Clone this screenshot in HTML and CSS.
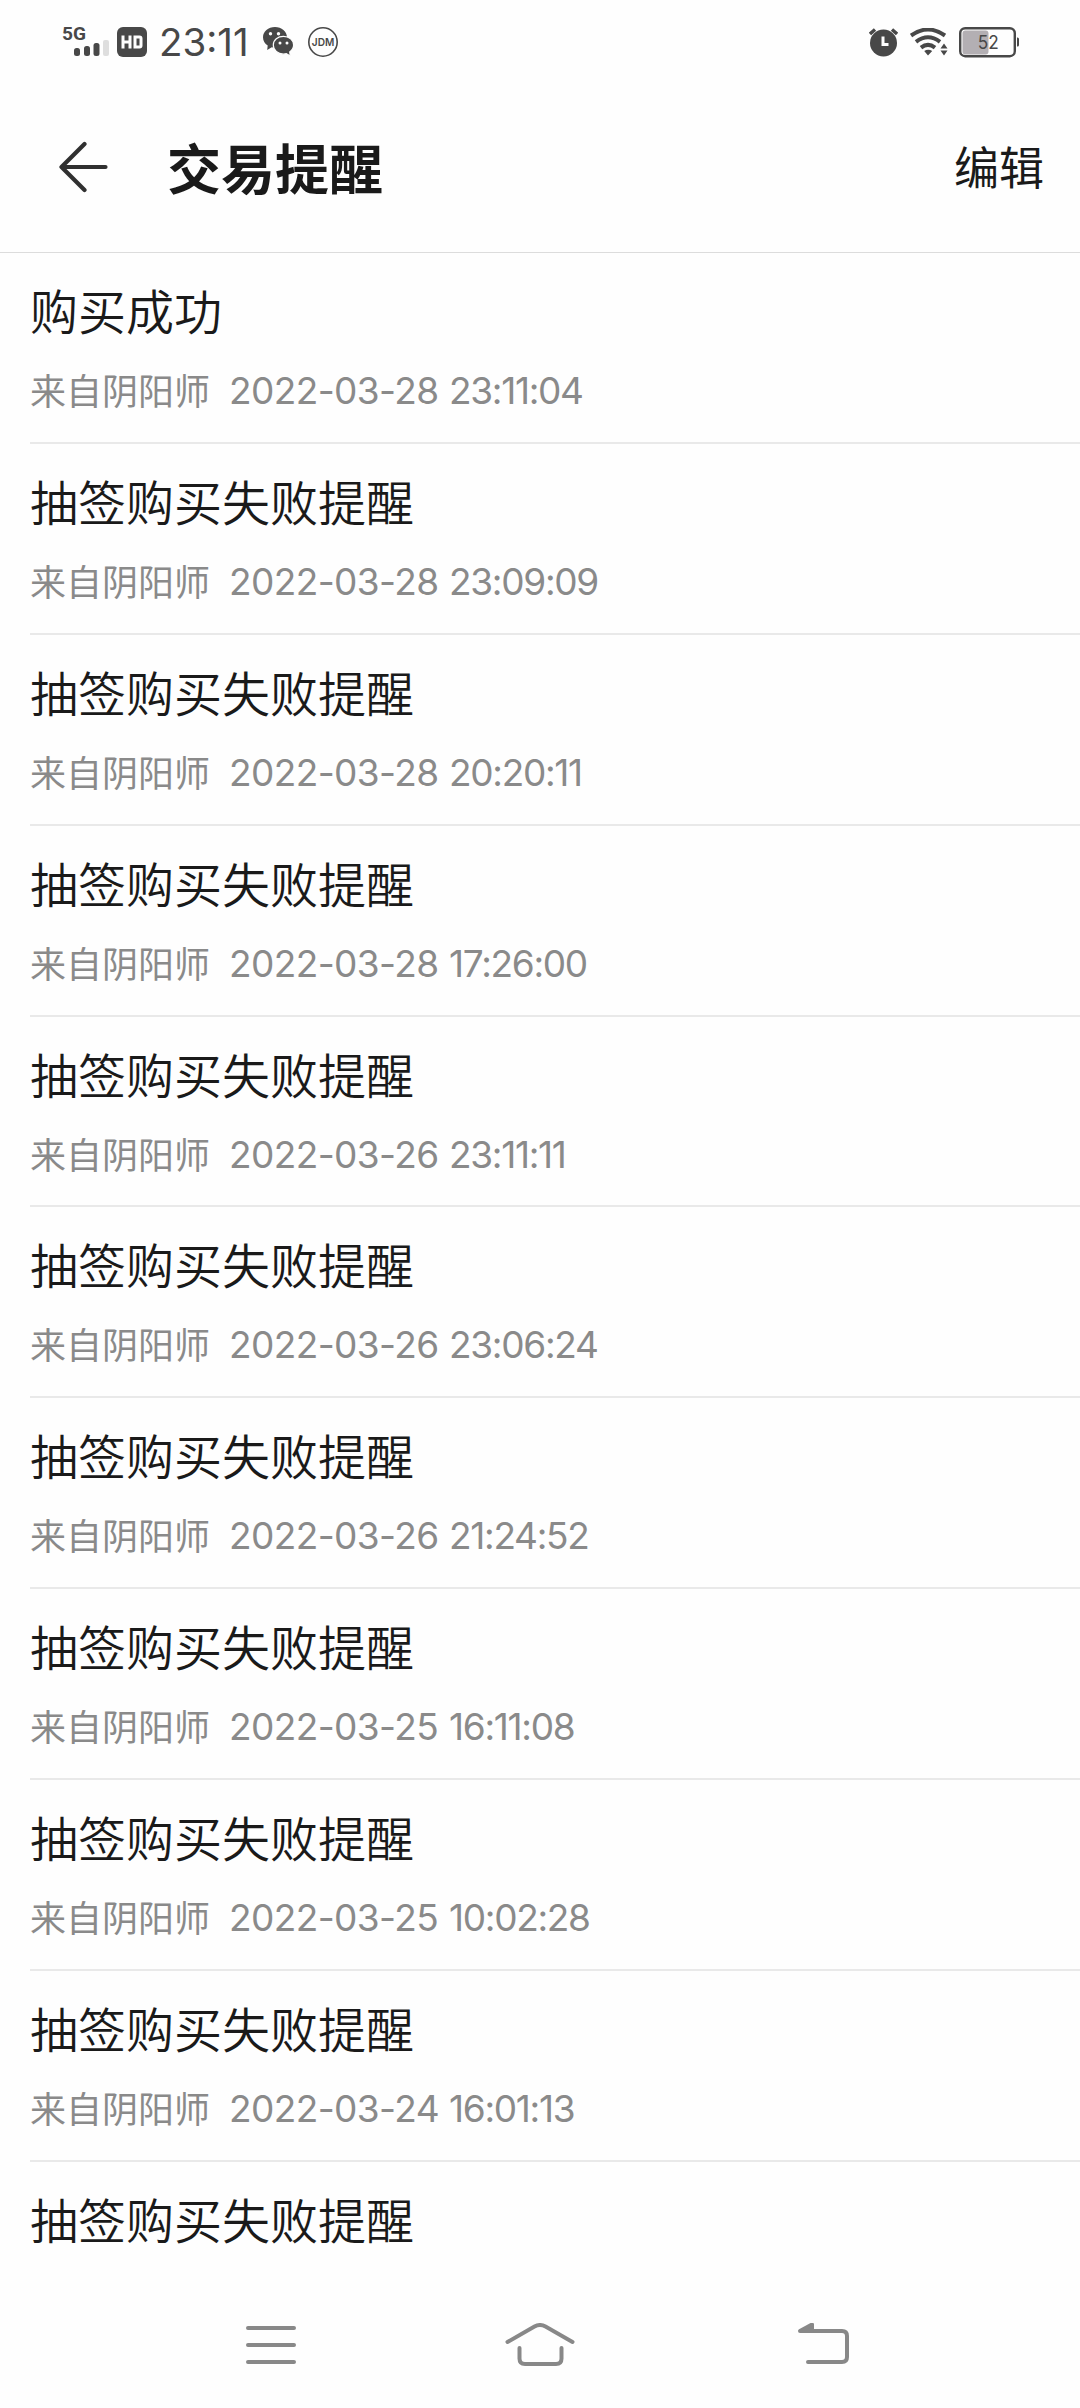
FILE: index.html
```html
<!DOCTYPE html>
<html lang="zh-CN">
<head>
<meta charset="utf-8">
<title>交易提醒</title>
<link rel="stylesheet" href="styles.css">
</head>
<body>
<div class="screen">
  <div class="status">
    <div class="status-left">
      <svg class="signal" width="48" height="38" viewBox="0 -4 48 38">
        <text class="net" x="0" y="15" textLength="24" lengthAdjust="spacingAndGlyphs">5G</text>
        <rect x="12" y="23" width="6" height="8" rx="2.5"/><rect x="22" y="21" width="6" height="10" rx="2.5"/><rect x="31.500" y="18" width="6" height="13" rx="2.500"/><rect class="faint" x="41" y="15" width="6" height="16" rx="2"/>
      </svg>
      <svg class="hd" width="30" height="30" viewBox="0 0 30 30"><rect width="30" height="30" rx="6"/><path class="cut" d="M6 8.500v13M13 8.500v13M6 15h7M18 10h4.500q1.500 0 1.500 1.500v7q0 1.500-1.500 1.500H18z"/></svg>
      <span class="clock">23:11</span>
      <svg class="wechat" width="31" height="30" viewBox="0 0 31 30"><path d="M12 0C5.200 0 0 4.500 0 10.200c0 3.500 1.800 6.400 4.700 8.300L4.200 23l4.500-2.800 3.300.5c6.500 0 12-4.500 12-10.300S18.500 0 12 0z"/><path class="bubble" d="M20.500 9.400c5.700 0 10.100 3.800 10.100 8.600 0 2.900-1.600 5.300-3.900 6.900l.6 4.100-4-2.300-2.800.5c-5.700 0-10.200-4-10.200-9.200s4.500-8.600 10.200-8.600z"/><g class="dot"><circle cx="7.500" cy="6.700" r="1.700"/><circle cx="15.500" cy="6.700" r="1.700"/><circle cx="17" cy="16" r="1.500"/><circle cx="24" cy="16" r="1.500"/></g></svg>
      <svg class="jdm" width="30" height="30" viewBox="0 0 30 30"><circle cx="15" cy="15" r="14.200"/><text x="3.800" y="19" textLength="22.500" lengthAdjust="spacingAndGlyphs">JDM</text></svg>
    </div>
    <div class="status-right">
      <svg class="alarm" width="29" height="29" viewBox="0 0 29 29"><circle cx="14.500" cy="15" r="13.500"/><path class="bell" d="M1 6l5-4.500M28 6l-5-4.500"/><path class="hand" d="M14 8.500V16.500h5.500"/></svg>
      <svg class="wifi" width="38" height="28" viewBox="0 0 38 28"><path class="arc" d="M1 7.500Q18 -4.500 35 7.500M6 13.800Q18 4.800 30 13.800M11 19.600Q18 14.200 25 19.600"/><path d="M14.200 23q4-2.500 8 0L18 27.500zM30.500 20.500L34 15.500l3.500 5zM30.500 22.500h7L34 27.500z"/></svg>
      <svg class="battery" width="61" height="31" viewBox="0 0 61 31"><rect class="level" x="3.500" y="3.500" width="26" height="24" rx="3"/><rect class="case" x="1.200" y="1.200" width="54.600" height="28" rx="5"/><path d="M58 10.500h.5q1.500 0 1.500 1.500v6q0 1.500-1.500 1.500H58z"/><text x="18.700" y="21.700" textLength="21" lengthAdjust="spacingAndGlyphs">52</text></svg>
    </div>
  </div>
  <header class="header">
    <svg class="back" width="50" height="52" viewBox="0 0 50 52"><path d="M25.500 3L2.500 26l23 23M3 26h43.500"/></svg>
    <h1 class="title">交易提醒</h1>
    <span class="edit">编辑</span>
  </header>
  <main class="list">
    <div class="row"><div class="name">购买成功</div><div class="meta"><span class="from">来自阴阳师</span><span class="date">2022-03-28</span><span class="time">23:11:04</span></div></div>
    <div class="row"><div class="name">抽签购买失败提醒</div><div class="meta"><span class="from">来自阴阳师</span><span class="date">2022-03-28</span><span class="time">23:09:09</span></div></div>
    <div class="row"><div class="name">抽签购买失败提醒</div><div class="meta"><span class="from">来自阴阳师</span><span class="date">2022-03-28</span><span class="time">20:20:11</span></div></div>
    <div class="row"><div class="name">抽签购买失败提醒</div><div class="meta"><span class="from">来自阴阳师</span><span class="date">2022-03-28</span><span class="time">17:26:00</span></div></div>
    <div class="row"><div class="name">抽签购买失败提醒</div><div class="meta"><span class="from">来自阴阳师</span><span class="date">2022-03-26</span><span class="time">23:11:11</span></div></div>
    <div class="row"><div class="name">抽签购买失败提醒</div><div class="meta"><span class="from">来自阴阳师</span><span class="date">2022-03-26</span><span class="time">23:06:24</span></div></div>
    <div class="row"><div class="name">抽签购买失败提醒</div><div class="meta"><span class="from">来自阴阳师</span><span class="date">2022-03-26</span><span class="time">21:24:52</span></div></div>
    <div class="row"><div class="name">抽签购买失败提醒</div><div class="meta"><span class="from">来自阴阳师</span><span class="date">2022-03-25</span><span class="time">16:11:08</span></div></div>
    <div class="row"><div class="name">抽签购买失败提醒</div><div class="meta"><span class="from">来自阴阳师</span><span class="date">2022-03-25</span><span class="time">10:02:28</span></div></div>
    <div class="row"><div class="name">抽签购买失败提醒</div><div class="meta"><span class="from">来自阴阳师</span><span class="date">2022-03-24</span><span class="time">16:01:13</span></div></div>
    <div class="row last"><div class="name">抽签购买失败提醒</div></div>
  </main>
  <nav class="nav">
    <svg class="menu" width="70" height="46" viewBox="0 0 70 46"><path d="M12 5h46M12 22h46M12 39h46"/></svg>
    <svg class="home" width="72" height="46" viewBox="0 1.500 72 46"><path d="M3.500 20.500L30.500 5q5.500-3 11 0l27 15.500M15.500 26.500V37q0 5.500 5.500 5.500h31q5.500 0 5.500-5.500V26.500"/></svg>
    <svg class="return" width="52" height="46" viewBox="0 1.500 52 46"><path d="M14 9.500H44q5 0 5 5V35.500q0 5-5 5H10"/><path class="tip" d="M2 9.500L14 3v6.500z"/></svg>
  </nav>
</div>
</body>
</html>
```
FILE: styles.css
```css
* { box-sizing: border-box; }
body { margin: 0; background: #fefefe; font-family: "Noto Sans CJK SC", sans-serif; color: #1a1a1a; }
.screen { width: 1080px; height: 2408px; display: flex; flex-direction: column; overflow: hidden; }
svg { display: block; flex: none; }

.status { height: 84px; display: flex; justify-content: space-between; padding: 0 60px 0 62px; fill: #484848; }
.status-left, .status-right { display: flex; align-items: center; }
.signal { margin-top: -4px; }
.net { font: 700 19px Roboto, sans-serif; }
.faint { fill: #dedede; }
.hd { margin-left: 7px; }
.cut { fill: none; stroke: #fefefe; stroke-width: 3; }
.clock { width: 100px; margin-left: 12px; font: 400 38.5px/84px Inter, sans-serif; color: #484848; white-space: nowrap; }
.wechat { margin-left: 4px; }
.bubble { stroke: #fefefe; stroke-width: 1.2; }
.dot { fill: #fefefe; }
.jdm { margin-left: 14px; }
.jdm circle { fill: none; stroke: #484848; stroke-width: 1.6; }
.jdm text { font: 600 11px Inter, sans-serif; }
.bell { fill: none; stroke: #484848; stroke-width: 3.4; }
.hand { fill: none; stroke: #fefefe; stroke-width: 3; }
.wifi { margin-left: 12px; }
.arc { fill: none; stroke: #484848; stroke-width: 4; }
.battery { margin-left: 11px; }
.level { fill: #b3afb3; }
.case { fill: none; stroke: #484848; stroke-width: 2.4; }
.battery text { font: 400 18px Inter, sans-serif; }

.header { height: 169px; flex: none; display: flex; align-items: center; padding: 0 36px 2px 59px; border-bottom: 1px solid #dcdcdc; }
.back path { fill: none; stroke: #303030; stroke-width: 4.2; stroke-linecap: round; stroke-linejoin: round; }
.title { margin: 0 0 0 58px; font-size: 54px; line-height: 60px; font-weight: 700; }
.edit { margin-left: auto; margin-top: -2px; font-size: 45px; line-height: 60px; }

.list { flex: 1; min-height: 0; overflow: hidden; }
.row { height: 190.9px; margin-left: 30px; padding-top: 28px; border-bottom: 2px solid #e9e9e9; }
.last { border-bottom: 0; }
.name { font-size: 48px; line-height: 56px; font-weight: 350; }
.meta { display: flex; margin-top: 28px; line-height: 48px; font-size: 36px; color: #8a8a8a; white-space: nowrap; }
.date, .time { padding-top: 2px; font-family: Inter, sans-serif; font-size: 37px; font-weight: 400; }
.date { width: 220px; margin-left: 19px; letter-spacing: -0.6px; }
.time { letter-spacing: -1.3px; }

.nav { height: 126px; flex: none; display: flex; align-items: flex-start; padding: 41px 0 0 236px; }
.home { margin-left: 198px; }
.return { margin-left: 222px; }
.nav path { fill: none; stroke: #888; stroke-width: 4; stroke-linecap: round; stroke-linejoin: round; }
.nav .tip { fill: #888; }
```
